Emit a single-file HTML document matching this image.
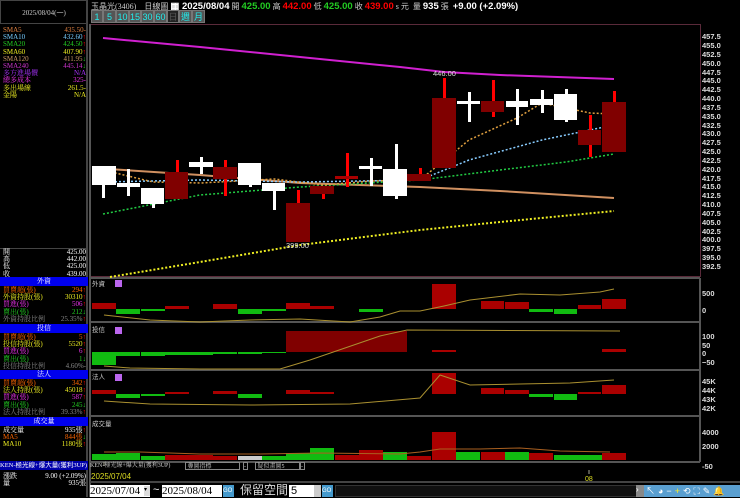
<!DOCTYPE html>
<html><head><meta charset="utf-8"><style>
*{margin:0;padding:0;box-sizing:border-box}
body{width:740px;height:497px;background:#000;overflow:hidden;position:relative;font-family:"Liberation Sans","Noto Sans CJK TC",sans-serif;color:#fff}
.a{position:absolute;white-space:nowrap}
.lp{position:absolute;left:0;width:88px;font-family:"Liberation Serif","Noto Serif CJK SC",serif;font-size:7px;line-height:7.2px}
.r{display:flex;justify-content:space-between;padding:0 2px 0 3px}
.hd{background:#0000ee;color:#fff;text-align:center;height:9px;line-height:9px;font-size:7px;margin:1px 0}
.btn{position:absolute;top:10px;height:13px;background:#555;color:#2ee;font-size:9px;text-align:center;line-height:13px;border:1px solid #777}
</style></head><body>
<!-- left panel -->
<div class="a" style="left:0;top:0;width:88px;height:497px;border-right:2px solid #444"></div>
<div class="a" style="left:0;top:0;width:88px;height:24px;border:1px solid #444;font-size:7px;color:#ccc;text-align:center;line-height:24px;font-family:'Liberation Serif',serif">2025/08/04(一)</div>
<div class="lp" style="top:27px">
<div class="r"><span style="color:#e08040">SMA5</span><span style="color:#e08040">435.50-</span></div>
<div class="r"><span style="color:#7cf">SMA10</span><span style="color:#7cf">432.60<b style="color:#f00">↑</b></span></div>
<div class="r"><span style="color:#2c2">SMA20</span><span style="color:#2c2">424.50<b style="color:#f00">↑</b></span></div>
<div class="r"><span style="color:#ee2">SMA60</span><span style="color:#ee2">407.90<b style="color:#f00">↑</b></span></div>
<div class="r"><span style="color:#c96">SMA120</span><span style="color:#c96">411.95<b style="color:#2c2">↓</b></span></div>
<div class="r"><span style="color:#c3c">SMA240</span><span style="color:#c3c">445.14<b style="color:#2c2">↓</b></span></div>
<div class="r"><span style="color:#a3f">多方進場價</span><span style="color:#a3f">N/A</span></div>
<div class="r"><span style="color:#e3e">總多成本</span><span style="color:#e3e">325-</span></div>
<div class="r"><span style="color:#ee2">多出場線</span><span style="color:#ee2">261.5-</span></div>
<div class="r"><span style="color:#ee2">金陽</span><span style="color:#ee2">N/A</span></div>
</div>
<div class="lp" style="top:248px;border-top:1px solid #444">
<div class="r"><span>開</span><span>425.00</span></div>
<div class="r"><span>高</span><span>442.00</span></div>
<div class="r"><span>低</span><span>425.00</span></div>
<div class="r"><span>收</span><span>439.00</span></div>
</div>
<div class="lp" style="top:276px">
<div class="hd">外資</div>
<div class="r"><span style="color:#f60">買賣超(張)</span><span style="color:#f60">294<b style="color:#f00">↑</b></span></div>
<div class="r"><span style="color:#ee2">外資持股(張)</span><span style="color:#ee2">30310<b style="color:#f00">↑</b></span></div>
<div class="r"><span style="color:#e3e">買進(張)</span><span style="color:#e3e">506<b style="color:#f00">↑</b></span></div>
<div class="r"><span style="color:#2c2">賣出(張)</span><span style="color:#2c2">212<b>↓</b></span></div>
<div class="r"><span style="color:#888">外資持股比例</span><span style="color:#888">25.35%<b style="color:#f00">↑</b></span></div>
</div>
<div class="lp" style="top:323px">
<div class="hd">投信</div>
<div class="r"><span style="color:#f60">買賣超(張)</span><span style="color:#f60">5<b style="color:#f00">↑</b></span></div>
<div class="r"><span style="color:#ee2">投信持股(張)</span><span style="color:#ee2">5520<b style="color:#f00">↑</b></span></div>
<div class="r"><span style="color:#e3e">買進(張)</span><span style="color:#e3e">6<b style="color:#f00">↑</b></span></div>
<div class="r"><span style="color:#2c2">賣出(張)</span><span style="color:#2c2">1<b>↓</b></span></div>
<div class="r"><span style="color:#888">投信持股比例</span><span style="color:#888">4.60%-</span></div>
</div>
<div class="lp" style="top:369px">
<div class="hd">法人</div>
<div class="r"><span style="color:#f60">買賣超(張)</span><span style="color:#f60">342<b style="color:#f00">↑</b></span></div>
<div class="r"><span style="color:#ee2">法人持股(張)</span><span style="color:#ee2">45018<b style="color:#f00">↑</b></span></div>
<div class="r"><span style="color:#e3e">買進(張)</span><span style="color:#e3e">587<b style="color:#f00">↑</b></span></div>
<div class="r"><span style="color:#2c2">賣出(張)</span><span style="color:#2c2">245<b>↓</b></span></div>
<div class="r"><span style="color:#888">法人持股比例</span><span style="color:#888">39.33%<b style="color:#f00">↑</b></span></div>
</div>
<div class="lp" style="top:416px">
<div class="hd">成交量</div>
<div class="r"><span>成交量</span><span>935張<b style="color:#f00">↑</b></span></div>
<div class="r"><span style="color:#f60">MA5</span><span style="color:#f60">844張<b style="color:#2c2">↓</b></span></div>
<div class="r"><span style="color:#ee2">MA10</span><span style="color:#ee2">1180張<b style="color:#f00">↑</b></span></div>
</div>
<div class="a" style="left:0;top:461px;width:88px;height:9px;background:#00a;color:#fff;font-size:6.5px;line-height:9px;font-family:'Liberation Serif',serif">KEN-極光線+爆大量(獲利3UP)</div>
<div class="lp" style="top:473px">
<div class="r"><span>漲跌</span><span>9.00 (+2.09%)</span></div>
<div class="r"><span>量</span><span>935張</span></div>
</div>
<!-- top bar -->
<div class="a" style="left:91px;top:1px;font-size:8px;color:#ccc;font-family:'Liberation Serif',serif">玉晶光(3406)&nbsp;&nbsp;&nbsp;&nbsp;日線圖 <span style="color:#fff;font-family:'Liberation Sans';font-weight:bold;font-size:9.5px">▦ 2025/08/04</span> 開 <b style="color:#2c2;font-size:9.5px;font-family:'Liberation Sans'">425.00</b> 高 <b style="color:#f00;font-size:9.5px;font-family:'Liberation Sans'">442.00</b> 低 <b style="color:#2c2;font-size:9.5px;font-family:'Liberation Sans'">425.00</b> 收 <b style="color:#f00;font-size:9.5px;font-family:'Liberation Sans'">439.00</b> s 元&nbsp; 量 <b style="color:#fff;font-size:9.5px;font-family:'Liberation Sans'">935</b> 張&nbsp; <b style="color:#fff;font-size:9.5px;font-family:'Liberation Sans'">+9.00 (+2.09%)</b></div>
<div class="btn" style="left:91px;width:12px">1</div>
<div class="btn" style="left:103px;width:13px">5</div>
<div class="btn" style="left:116px;width:13px">10</div>
<div class="btn" style="left:129px;width:12px">15</div>
<div class="btn" style="left:141px;width:13px">30</div>
<div class="btn" style="left:154px;width:13px">60</div>
<div class="btn" style="left:167px;width:12px;background:#222;color:#555">日</div>
<div class="btn" style="left:179px;width:13px">週</div>
<div class="btn" style="left:192px;width:13px">月</div>
<svg class="a" style="left:0;top:0" width="740" height="497" font-family="Liberation Sans" font-size="7.5">
<rect x="90.5" y="24.5" width="610" height="252" fill="none" stroke="#5a2a3a"/>
<g stroke="#555" stroke-width="2">
<line x1="90" y1="278" x2="700" y2="278"/><line x1="90" y1="322" x2="700" y2="322"/><line x1="90" y1="370" x2="700" y2="370"/><line x1="90" y1="416" x2="700" y2="416"/><line x1="90" y1="462" x2="700" y2="462"/>
<line x1="90" y1="24" x2="90" y2="497"/><line x1="700" y1="278" x2="700" y2="462"/>
</g>
<line x1="90" y1="482" x2="740" y2="482" stroke="#444" stroke-width="2"/>
<!-- axis labels -->
<g fill="#ddd" font-weight="bold">
<text x="702" y="39">457.5</text><text x="702" y="48">455.0</text><text x="702" y="57">452.5</text><text x="702" y="66">450.0</text><text x="702" y="75">447.5</text><text x="702" y="83">445.0</text><text x="702" y="92">442.5</text><text x="702" y="101">440.0</text><text x="702" y="110">437.5</text><text x="702" y="119">435.0</text><text x="702" y="128">432.5</text><text x="702" y="136">430.0</text><text x="702" y="145">427.5</text><text x="702" y="154">425.0</text><text x="702" y="163">422.5</text><text x="702" y="172">420.0</text><text x="702" y="181">417.5</text><text x="702" y="189">415.0</text><text x="702" y="198">412.5</text><text x="702" y="207">410.0</text><text x="702" y="216">407.5</text><text x="702" y="225">405.0</text><text x="702" y="234">402.5</text><text x="702" y="242">400.0</text><text x="702" y="251">397.5</text><text x="702" y="260">395.0</text><text x="702" y="269">392.5</text>
<text x="702" y="296">500</text><text x="702" y="313">0</text>
<text x="702" y="339">100</text><text x="702" y="348">50</text><text x="702" y="356">0</text><text x="702" y="365">−50</text>
<text x="702" y="384">45K</text><text x="702" y="393">44K</text><text x="702" y="402">43K</text><text x="702" y="411">42K</text>
<text x="702" y="435">4000</text><text x="702" y="449">2000</text><text x="702" y="469">-50</text>
</g>
<!-- MAs -->
<polyline points="103,38 200,47 300,57 400,67 444,72 500,75 614,79" fill="none" stroke="#d020d0" stroke-width="2"/>
<polyline points="93,168 200,175 300,183 420,187 500,191 614,198" fill="none" stroke="#d09060" stroke-width="2"/>
<polyline points="110,277 200,262 300,245 420,230 500,222 614,211" fill="none" stroke="#ee2" stroke-width="2" stroke-dasharray="2,2"/>
<polyline points="103,214 200,195 300,187 420,180 500,170 566,162 614,154" fill="none" stroke="#2c4" stroke-width="1.5" stroke-dasharray="2,2"/>
<polyline points="103,182 200,180 300,182 420,180 469,160 542,140 614,125" fill="none" stroke="#8cf" stroke-width="1.5" stroke-dasharray="2,2"/>
<polyline points="103,170 153,182 201,183 274,179 323,185 371,181 420,180 469,140 517,118 542,103 590,113 614,114" fill="none" stroke="#e0a040" stroke-width="1.5" stroke-dasharray="2,2"/>
<!-- candles -->
<g fill="#fff">
<rect x="102" y="166" width="3" height="32"/><rect x="92" y="166" width="24" height="19"/>
<rect x="127" y="169" width="3" height="27"/><rect x="117" y="183" width="23" height="4"/>
<rect x="152" y="188" width="3" height="20"/><rect x="141" y="188" width="23" height="16"/>
<rect x="200" y="157" width="3" height="17"/><rect x="189" y="162" width="24" height="5"/>
<rect x="249" y="163" width="3" height="24"/><rect x="238" y="163" width="23" height="22"/>
<rect x="273" y="183" width="3" height="27"/><rect x="262" y="183" width="23" height="8"/>
<rect x="370" y="158" width="3" height="28"/><rect x="359" y="166" width="23" height="3"/>
<rect x="395" y="144" width="3" height="55"/><rect x="383" y="169" width="24" height="27"/>
<rect x="468" y="92" width="3" height="30"/><rect x="457" y="101" width="23" height="3"/>
<rect x="516" y="89" width="3" height="36"/><rect x="506" y="101" width="22" height="6"/>
<rect x="541" y="90" width="3" height="23"/><rect x="530" y="99" width="23" height="6"/>
<rect x="565" y="89" width="3" height="33"/><rect x="554" y="94" width="23" height="26"/>
</g>
<g fill="#f00">
<rect x="176" y="160" width="3" height="39"/><rect x="224" y="160" width="3" height="36"/><rect x="297" y="190" width="3" height="52"/><rect x="322" y="186" width="3" height="13"/><rect x="346" y="153" width="3" height="34"/><rect x="419" y="168" width="3" height="13"/><rect x="443" y="78" width="3" height="90"/><rect x="492" y="80" width="3" height="37"/><rect x="589" y="115" width="3" height="42"/><rect x="613" y="91" width="3" height="61"/>
</g>
<g fill="#800000">
<rect x="165" y="172" width="23" height="27"/><rect x="213" y="167" width="24" height="12"/><rect x="286" y="203" width="24" height="39"/><rect x="310" y="186" width="24" height="8"/><rect x="335" y="176" width="23" height="3" fill="#a00"/><rect x="407" y="174" width="24" height="7"/><rect x="432" y="98" width="24" height="70"/><rect x="481" y="101" width="23" height="11"/><rect x="578" y="130" width="23" height="15"/><rect x="602" y="102" width="24" height="50"/>
</g>
<text x="286" y="248" fill="#ddd" font-size="7.5">399.00</text>
<text x="433" y="76" fill="#ddd" font-size="7.5">446.00</text>
<!-- sub panel labels -->
<g fill="#ccc" font-size="6.5" font-family="Noto Sans CJK TC"><text x="92" y="286">外資</text><text x="92" y="332">投信</text><text x="92" y="379">法人</text><text x="92" y="426">成交量</text></g>
<g fill="#b6e"><rect x="115" y="280" width="7" height="7"/><rect x="115" y="327" width="7" height="7"/><rect x="115" y="374" width="7" height="7"/></g>
<!-- 外資 -->
<g fill="#a00"><rect x="92" y="303" width="24" height="6"/><rect x="165" y="306" width="24" height="3"/><rect x="213" y="304" width="24" height="5"/><rect x="286" y="303" width="24" height="6"/><rect x="310" y="306" width="24" height="3"/><rect x="432" y="284" width="24" height="25"/><rect x="481" y="301" width="23" height="8"/><rect x="505" y="302" width="24" height="7"/><rect x="578" y="305" width="23" height="4"/><rect x="602" y="299" width="24" height="10"/></g>
<g fill="#1b1"><rect x="116" y="309" width="24" height="5"/><rect x="141" y="309" width="24" height="2"/><rect x="238" y="309" width="24" height="5"/><rect x="262" y="309" width="24" height="2"/><rect x="359" y="309" width="24" height="3"/><rect x="529" y="309" width="24" height="3"/><rect x="554" y="309" width="23" height="5"/></g>
<polyline points="104,315 150,320 200,322 250,320 300,319 350,322 380,317 400,311 420,311 444,306 470,300 520,294 560,295 600,292 614,289" fill="none" stroke="#aa9030" stroke-width="1"/>
<!-- 投信 -->
<rect x="92" y="352" width="24" height="13" fill="#1b1"/>
<g fill="#1b1"><rect x="116" y="352" width="24" height="4"/><rect x="141" y="352" width="24" height="4"/><rect x="165" y="352" width="24" height="3"/><rect x="189" y="352" width="24" height="3"/><rect x="213" y="352" width="24" height="2"/><rect x="238" y="352" width="24" height="2"/><rect x="262" y="352" width="24" height="1"/></g>
<rect x="286" y="331" width="121" height="21" fill="#800000"/>
<g fill="#a00"><rect x="432" y="350" width="24" height="2"/><rect x="602" y="349" width="24" height="3"/></g>
<polyline points="104,366 130,368 200,369 280,369 310,360 380,336 407,330 620,331" fill="none" stroke="#aa9030" stroke-width="1"/>
<!-- 法人 -->
<g fill="#a00"><rect x="92" y="390" width="24" height="4"/><rect x="165" y="392" width="24" height="2"/><rect x="213" y="391" width="24" height="3"/><rect x="286" y="390" width="24" height="4"/><rect x="310" y="392" width="24" height="2"/><rect x="432" y="373" width="24" height="21"/><rect x="481" y="388" width="23" height="6"/><rect x="505" y="390" width="24" height="4"/><rect x="578" y="392" width="23" height="2"/><rect x="602" y="385" width="24" height="9"/></g>
<g fill="#1b1"><rect x="116" y="394" width="24" height="4"/><rect x="141" y="394" width="24" height="2"/><rect x="238" y="394" width="24" height="4"/><rect x="529" y="394" width="24" height="3"/><rect x="554" y="394" width="23" height="6"/></g>
<polyline points="104,401 150,404 250,405 350,404 420,398 440,375 470,385 520,384 570,383 614,380" fill="none" stroke="#aa9030" stroke-width="1"/>
<!-- volume -->
<g fill="#1b1"><rect x="92" y="454" width="24" height="6"/><rect x="116" y="453" width="24" height="7"/><rect x="141" y="456" width="24" height="4"/><rect x="238" y="456" width="24" height="4" fill="#ccc"/><rect x="262" y="456" width="24" height="4"/><rect x="286" y="453" width="24" height="7"/><rect x="310" y="448" width="24" height="12"/><rect x="383" y="452" width="24" height="8"/><rect x="456" y="452" width="24" height="8"/><rect x="505" y="452" width="24" height="8"/><rect x="554" y="455" width="24" height="5"/><rect x="578" y="455" width="24" height="5"/></g>
<g fill="#a00"><rect x="165" y="455" width="24" height="5"/><rect x="189" y="455" width="24" height="5"/><rect x="213" y="456" width="24" height="4"/><rect x="335" y="455" width="24" height="5"/><rect x="359" y="450" width="24" height="10"/><rect x="407" y="456" width="24" height="4"/><rect x="432" y="432" width="24" height="28"/><rect x="481" y="452" width="24" height="8"/><rect x="529" y="453" width="24" height="7"/><rect x="602" y="453" width="24" height="7"/></g>
<polyline points="104,452 140,452 200,454 260,454 320,453 400,454 420,452 440,449 480,449 520,448 560,451 610,452" fill="none" stroke="#aa6020" stroke-width="1"/>
<!-- time axis -->
<line x1="104" y1="462" x2="104" y2="466" stroke="#aa9"/><line x1="589" y1="470" x2="589" y2="474" stroke="#aa9"/>
<text x="91" y="479" fill="#dd2" font-size="8">2025/07/04</text>
<text x="585" y="481" fill="#dd2" font-size="7">08</text>
</svg>
<!-- indicator selector row -->
<div class="a" style="left:90px;top:462px;width:610px;height:9px;font-size:6px;line-height:8px;color:#ccc;font-family:'Liberation Serif','Noto Serif CJK SC',serif">
<span class="a" style="left:0">KEN-極光線+爆大量(獲利3UP)</span>
<span class="a" style="left:95px;width:55px;height:8px;border:1px solid #888">&nbsp;疊圖指標</span>
<span class="a" style="left:153px;width:5px;height:8px;border:1px solid #888">-</span>
<span class="a" style="left:165px;width:45px;height:8px;border:1px solid #888">&nbsp;疑似畫圖5</span>
<span class="a" style="left:210px;width:5px;height:8px;border:1px solid #888">-</span>
</div>
<!-- bottom bar -->
<div class="a" style="left:90px;top:485px;width:60px;height:12px;background:#fff;color:#000;font-size:11px;line-height:12px;font-family:'Liberation Serif',serif">2025/07/04</div>
<div class="a" style="left:144px;top:486px;width:6px;height:10px;background:#ddd;font-size:6px;color:#000">▾</div>
<div class="a" style="left:153px;top:484px;color:#fff;font-size:11px">~</div>
<div class="a" style="left:162px;top:485px;width:60px;height:12px;background:#fff;color:#000;font-size:11px;line-height:12px;font-family:'Liberation Serif',serif">2025/08/04</div>
<div class="a" style="left:223px;top:485px;width:11px;height:12px;background:#49c;color:#fff;font-size:6px;line-height:12px">GO</div>
<div class="a" style="left:240px;top:483px;color:#ddd;font-size:12px;font-family:'Noto Sans CJK TC',sans-serif;line-height:14px">保留空間</div>
<div class="a" style="left:289px;top:485px;width:25px;height:12px;background:#fff;color:#000;font-size:11px;line-height:12px;padding-left:2px">5</div>
<div class="a" style="left:314px;top:485px;width:7px;height:12px;background:#ccc"></div>
<div class="a" style="left:322px;top:485px;width:11px;height:12px;background:#49c;color:#fff;font-size:6px;line-height:12px">GO</div>
<div class="a" style="left:335px;top:485px;width:405px;height:12px;background:#111;border:1px solid #333"></div>
<div class="a" style="left:636px;top:485px;width:104px;height:12px;background:#5a9fd0"></div>
<div class="a" style="left:636px;top:485px;width:8px;height:12px;background:#888;font-size:8px;color:#fff">›</div>
<div class="a" style="left:646px;top:484px;font-size:9px;color:#fff;letter-spacing:3px">↖◕−<span style="color:#fe2">+</span>⟲⛶✎<span style="color:#fc3">🔔</span></div>
</body></html>
